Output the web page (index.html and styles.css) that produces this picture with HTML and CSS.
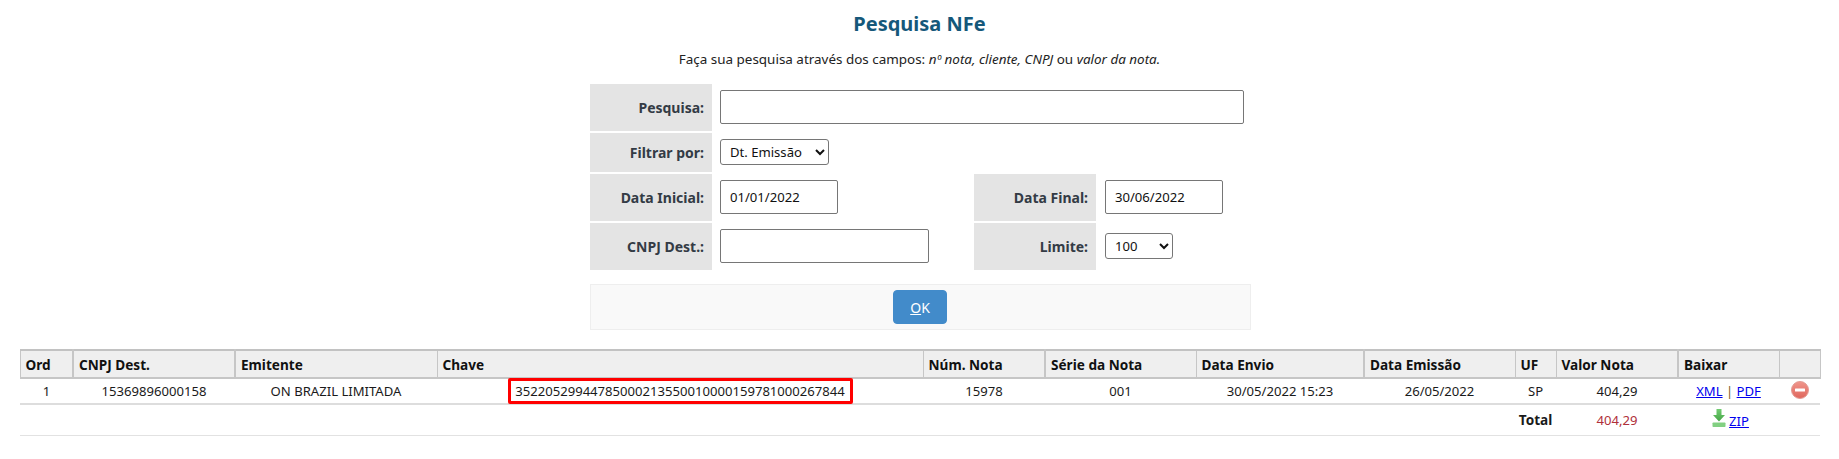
FILE: index.html
```html
<!DOCTYPE html>
<html lang="pt-BR">
<head>
<meta charset="utf-8">
<title>Pesquisa NFe</title>
<link rel="stylesheet" href="styles.css">
</head>
<body>
<main class="page">
  <h1 class="title">Pesquisa NFe</h1>
  <p class="hint">Faça sua pesquisa através dos campos: <em>nº nota, cliente, CNPJ</em> ou <em>valor da nota.</em></p>
  <form class="search">
    <div class="grid">
      <label class="lbl">Pesquisa:</label>
      <div class="field span3"><input class="inp inp-full" type="text"></div>
      <label class="lbl">Filtrar por:</label>
      <div class="field span3"><select class="sel sel-filter"><option>Dt. Emissão</option></select></div>
      <label class="lbl">Data Inicial:</label>
      <div class="field"><input class="inp inp-date" type="text" value="01/01/2022"></div>
      <label class="lbl">Data Final:</label>
      <div class="field field-r"><input class="inp inp-date" type="text" value="30/06/2022"></div>
      <label class="lbl">CNPJ Dest.:</label>
      <div class="field"><input class="inp inp-cnpj" type="text"></div>
      <label class="lbl">Limite:</label>
      <div class="field field-r"><select class="sel sel-limit"><option>100</option></select></div>
    </div>
    <div class="actions"><button class="btn" type="button"><u>O</u>K</button></div>
  </form>
  <table class="results">
    <thead>
      <tr>
        <th class="thick c-ord">Ord</th>
        <th class="thick c-cnpj">CNPJ Dest.</th>
        <th class="c-emit">Emitente</th>
        <th class="c-key">Chave</th>
        <th class="thick c-num">Núm. Nota</th>
        <th class="c-serie">Série da Nota</th>
        <th class="thick c-env">Data Envio</th>
        <th class="c-emis">Data Emissão</th>
        <th class="c-uf">UF</th>
        <th class="thick c-val">Valor Nota</th>
        <th class="c-bx">Baixar</th>
        <th class="c-del"></th>
      </tr>
    </thead>
    <tbody>
      <tr class="row">
        <td>1</td>
        <td>15369896000158</td>
        <td>ON BRAZIL LIMITADA</td>
        <td class="key-cell"><span class="key">35220529944785000213550010000159781000267844</span></td>
        <td>15978</td>
        <td>001</td>
        <td>30/05/2022 15:23</td>
        <td>26/05/2022</td>
        <td>SP</td>
        <td>404,29</td>
        <td><a href="#">XML</a> <span class="sep">|</span> <a href="#">PDF</a></td>
        <td class="del-cell">
          <svg class="ico-del" width="18" height="18" viewBox="0 0 18 18" aria-label="Excluir">
            <defs>
              <linearGradient id="redg" x1="0" y1="0" x2="0" y2="1">
                <stop offset="0" stop-color="#f0968c"/>
                <stop offset="1" stop-color="#df665c"/>
              </linearGradient>
            </defs>
            <circle cx="9" cy="9" r="8.5" fill="url(#redg)" stroke="#e39b94" stroke-width="1"/>
            <rect x="4" y="7.5" width="10" height="3" rx="0.5" fill="#fff"/>
          </svg>
        </td>
      </tr>
      <tr class="total">
        <td colspan="8"></td>
        <td class="total-lbl">Total</td>
        <td class="total-val">404,29</td>
        <td class="zip-cell">
          <svg class="ico-dl" width="14" height="18" viewBox="0 0 14 18" aria-label="Baixar">
            <defs>
              <linearGradient id="greeng" x1="0" y1="0" x2="0" y2="1">
                <stop offset="0" stop-color="#72cc72"/>
                <stop offset="1" stop-color="#46a546"/>
              </linearGradient>
            </defs>
            <path d="M4.5 0h5v6H13L7 12.5 1 6h3.5z" fill="url(#greeng)"/>
            <rect x="0.5" y="13.5" width="13" height="4.5" rx="0.8" fill="#82d082"/>
          </svg><a href="#">ZIP</a>
        </td>
        <td></td>
      </tr>
    </tbody>
  </table>
</main>
</body>
</html>
```
FILE: styles.css
```css
* { box-sizing: border-box; }
html, body { margin: 0; padding: 0; background: #fff; }
body {
  font-family: "Noto Sans", "Liberation Sans", sans-serif;
  font-size: 13.1px;
  color: #1a1a1a;
}
.page { display: flex; flex-direction: column; align-items: center; }
.title {
  margin: 12px 0 0;
  font-size: 20px;
  line-height: 24px;
  font-weight: 700;
  color: #15587a;
}
.hint { margin: 14px 0 0; font-size: 13.45px; line-height: 18px; color: #222; }
.search { width: 661px; margin: 16px 0 0 2px; }
.grid {
  display: grid;
  grid-template-columns: 122px 258px 122px 153px;
  grid-template-rows: 47px 39px 47px 47px;
  gap: 2px;
}
.lbl {
  display: flex;
  align-items: center;
  justify-content: flex-end;
  padding-right: 8px;
  background: #e4e4e4;
  font-weight: 700;
  color: #333b45;
  font-size: 14px;
}
.field { display: flex; align-items: center; padding: 0 0 1px 6px; }
.field-r { padding-left: 7px; }
.span3 { grid-column: span 3; }
.inp {
  height: 34px;
  padding: 0 9px;
  border: 1px solid #767676;
  border-radius: 2px;
  background: #fff;
  font: 13.1px "Noto Sans", "Liberation Sans", sans-serif;
  color: #111;
}
.inp-full { width: 524px; }
.inp-date { width: 118px; }
.inp-cnpj { width: 209px; }
.sel {
  height: 26px;
  padding: 0 0 0 5px;
  border: 1px solid #767676;
  border-radius: 3px;
  background: #fff;
  font: 13.1px "Noto Sans", "Liberation Sans", sans-serif;
  color: #111;
}
.sel-filter { width: 109px; }
.sel-limit { width: 68px; }
.actions {
  display: flex;
  justify-content: center;
  align-items: center;
  height: 46px;
  margin-top: 14px;
  padding-right: 1px;
  background: #f9f9f9;
  border: 1px solid #eeeeee;
}
.btn {
  width: 54px;
  height: 34px;
  padding: 0;
  border: 1px solid #428bca;
  border-radius: 4px;
  background: #428bca;
  color: #fff;
  font: 14px "Noto Sans", "Liberation Sans", sans-serif;
}
.results {
  width: 1800px;
  margin: 19px 0 0 1px;
  border-collapse: collapse;
  table-layout: fixed;
  border-top: 2px solid #c2c2c2;
}
.results th {
  height: 28px;
  padding: 0 5px;
  text-align: left;
  background: #efefef;
  font-weight: 700;
  color: #111;
  font-size: 13.6px;
  border-right: 1px solid #c6c6c6;
  border-bottom: 2px solid #c6c6c6;
}
.results th.thick { border-right-width: 2px; }
.results th.c-ord { border-left: 1px solid #c6c6c6; }
.results th.c-del { border-right: 1px solid #c6c6c6; }
.c-ord { width: 53px; }
.c-cnpj { width: 162px; }
.c-emit { width: 202px; }
.c-key { width: 486px; }
.c-num { width: 122px; }
.c-serie { width: 151px; }
.c-env { width: 168px; }
.c-emis { width: 151px; }
.c-uf { width: 41px; }
.c-val { width: 122px; }
.c-bx { width: 101px; }
.c-del { width: 41px; }
.results td { padding: 0; text-align: center; color: #1a1a1a; }
.row td { height: 26px; border-bottom: 2px solid #dddddd; }
.total td { height: 31px; border-bottom: 1px solid #e2e2e2; }
.key {
  position: relative;
  display: inline-block;
  line-height: 20px;
}
.key::after {
  content: "";
  position: absolute;
  left: -7px;
  right: -8px;
  top: -3px;
  bottom: -3px;
  border: 3px solid #f00;
  border-radius: 2px;
}
a { color: #00e; }
.sep { color: #7a5a20; }
.del-cell { vertical-align: top; }
.ico-del { display: block; margin: 2px auto 0; }
.total-lbl { font-weight: 700; font-size: 13.6px; }
.results .total-val { color: #b0303a; }
.results .zip-cell { white-space: nowrap; padding-left: 4px; }
.ico-dl { margin-right: 3px; vertical-align: -1px; }
```
